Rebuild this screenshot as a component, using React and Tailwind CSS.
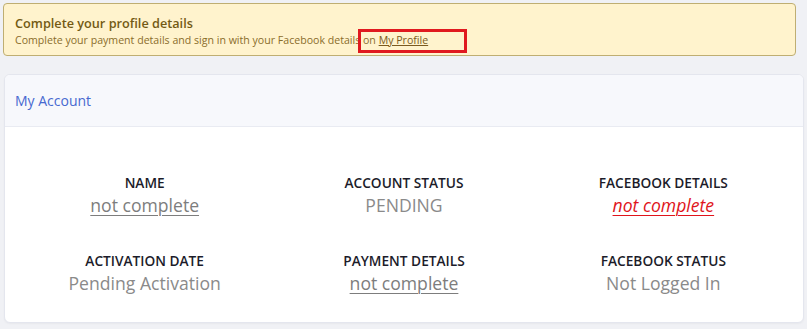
import React from 'react';

const fields = [
    { label: 'NAME', value: 'not complete', kind: 'link' },
    { label: 'ACCOUNT STATUS', value: 'PENDING', kind: 'plain' },
    { label: 'FACEBOOK DETAILS', value: 'not complete', kind: 'alert' },
    { label: 'ACTIVATION DATE', value: 'Pending Activation', kind: 'plain' },
    { label: 'PAYMENT DETAILS', value: 'not complete', kind: 'link' },
    { label: 'FACEBOOK STATUS', value: 'Not Logged In', kind: 'plain' },
];

const valueClass = {
    link: 'text-[#7d7d7d] underline underline-offset-[3px] decoration-1',
    plain: 'text-[#8a8a8a]',
    alert: 'text-[#e0141b] italic underline underline-offset-[3px] decoration-1',
};

const Field = ({ label, value, kind }) => (
    <div className="flex flex-col items-center">
        <span className="text-[13.7px] leading-[20px] font-semibold text-[#1c1c2a]">{label}</span>
        <span className={`text-[17.6px] leading-[24px] ${valueClass[kind]}`}>{value}</span>
    </div>
);

export default function App() {
    return (
        <div className="min-h-[329px] bg-[#f0f1f5] px-[3px] pt-[3px] pb-[5px] font-['Open_Sans',sans-serif]">
            {/* profile warning */}
            <div className="relative h-[53px] rounded-[4px] border border-[#bfae72] bg-[#fff3cd] px-[11px] pt-[11px] mr-[8px]">
                <div className="text-[12.7px] leading-[17px] font-semibold text-[#735a14]">Complete your profile details</div>
                <div className="text-[10.6px] leading-[17px] text-[#8a6d2b]">
                    Complete your payment details and sign in with your Facebook details on{' '}
                    <a href="#" className="underline text-[#7a5a20]">My Profile</a>
                </div>
                <span className="absolute left-[354px] top-[25px] w-[109px] h-[24px] border-[3px] border-[#e0191f]" />
            </div>

            {/* account card */}
            <div className="mt-[18px] ml-[1px] rounded-[6px] border border-[#e4e6ee] bg-white shadow-[0_1px_2px_rgba(0,0,0,0.04)] overflow-hidden">
                <div className="h-[52px] flex items-center px-[10px] bg-[#f7f8fc] border-b border-[#e9ebf2]">
                    <span className="text-[14px] text-[#4769d0]">My Account</span>
                </div>
                <div className="grid grid-cols-3 gap-y-[34px] px-[10px] pt-[46px] pb-[27px]">
                    {fields.map(f => (
                        <Field key={f.label} {...f} />
                    ))}
                </div>
            </div>
        </div>
    );
}
